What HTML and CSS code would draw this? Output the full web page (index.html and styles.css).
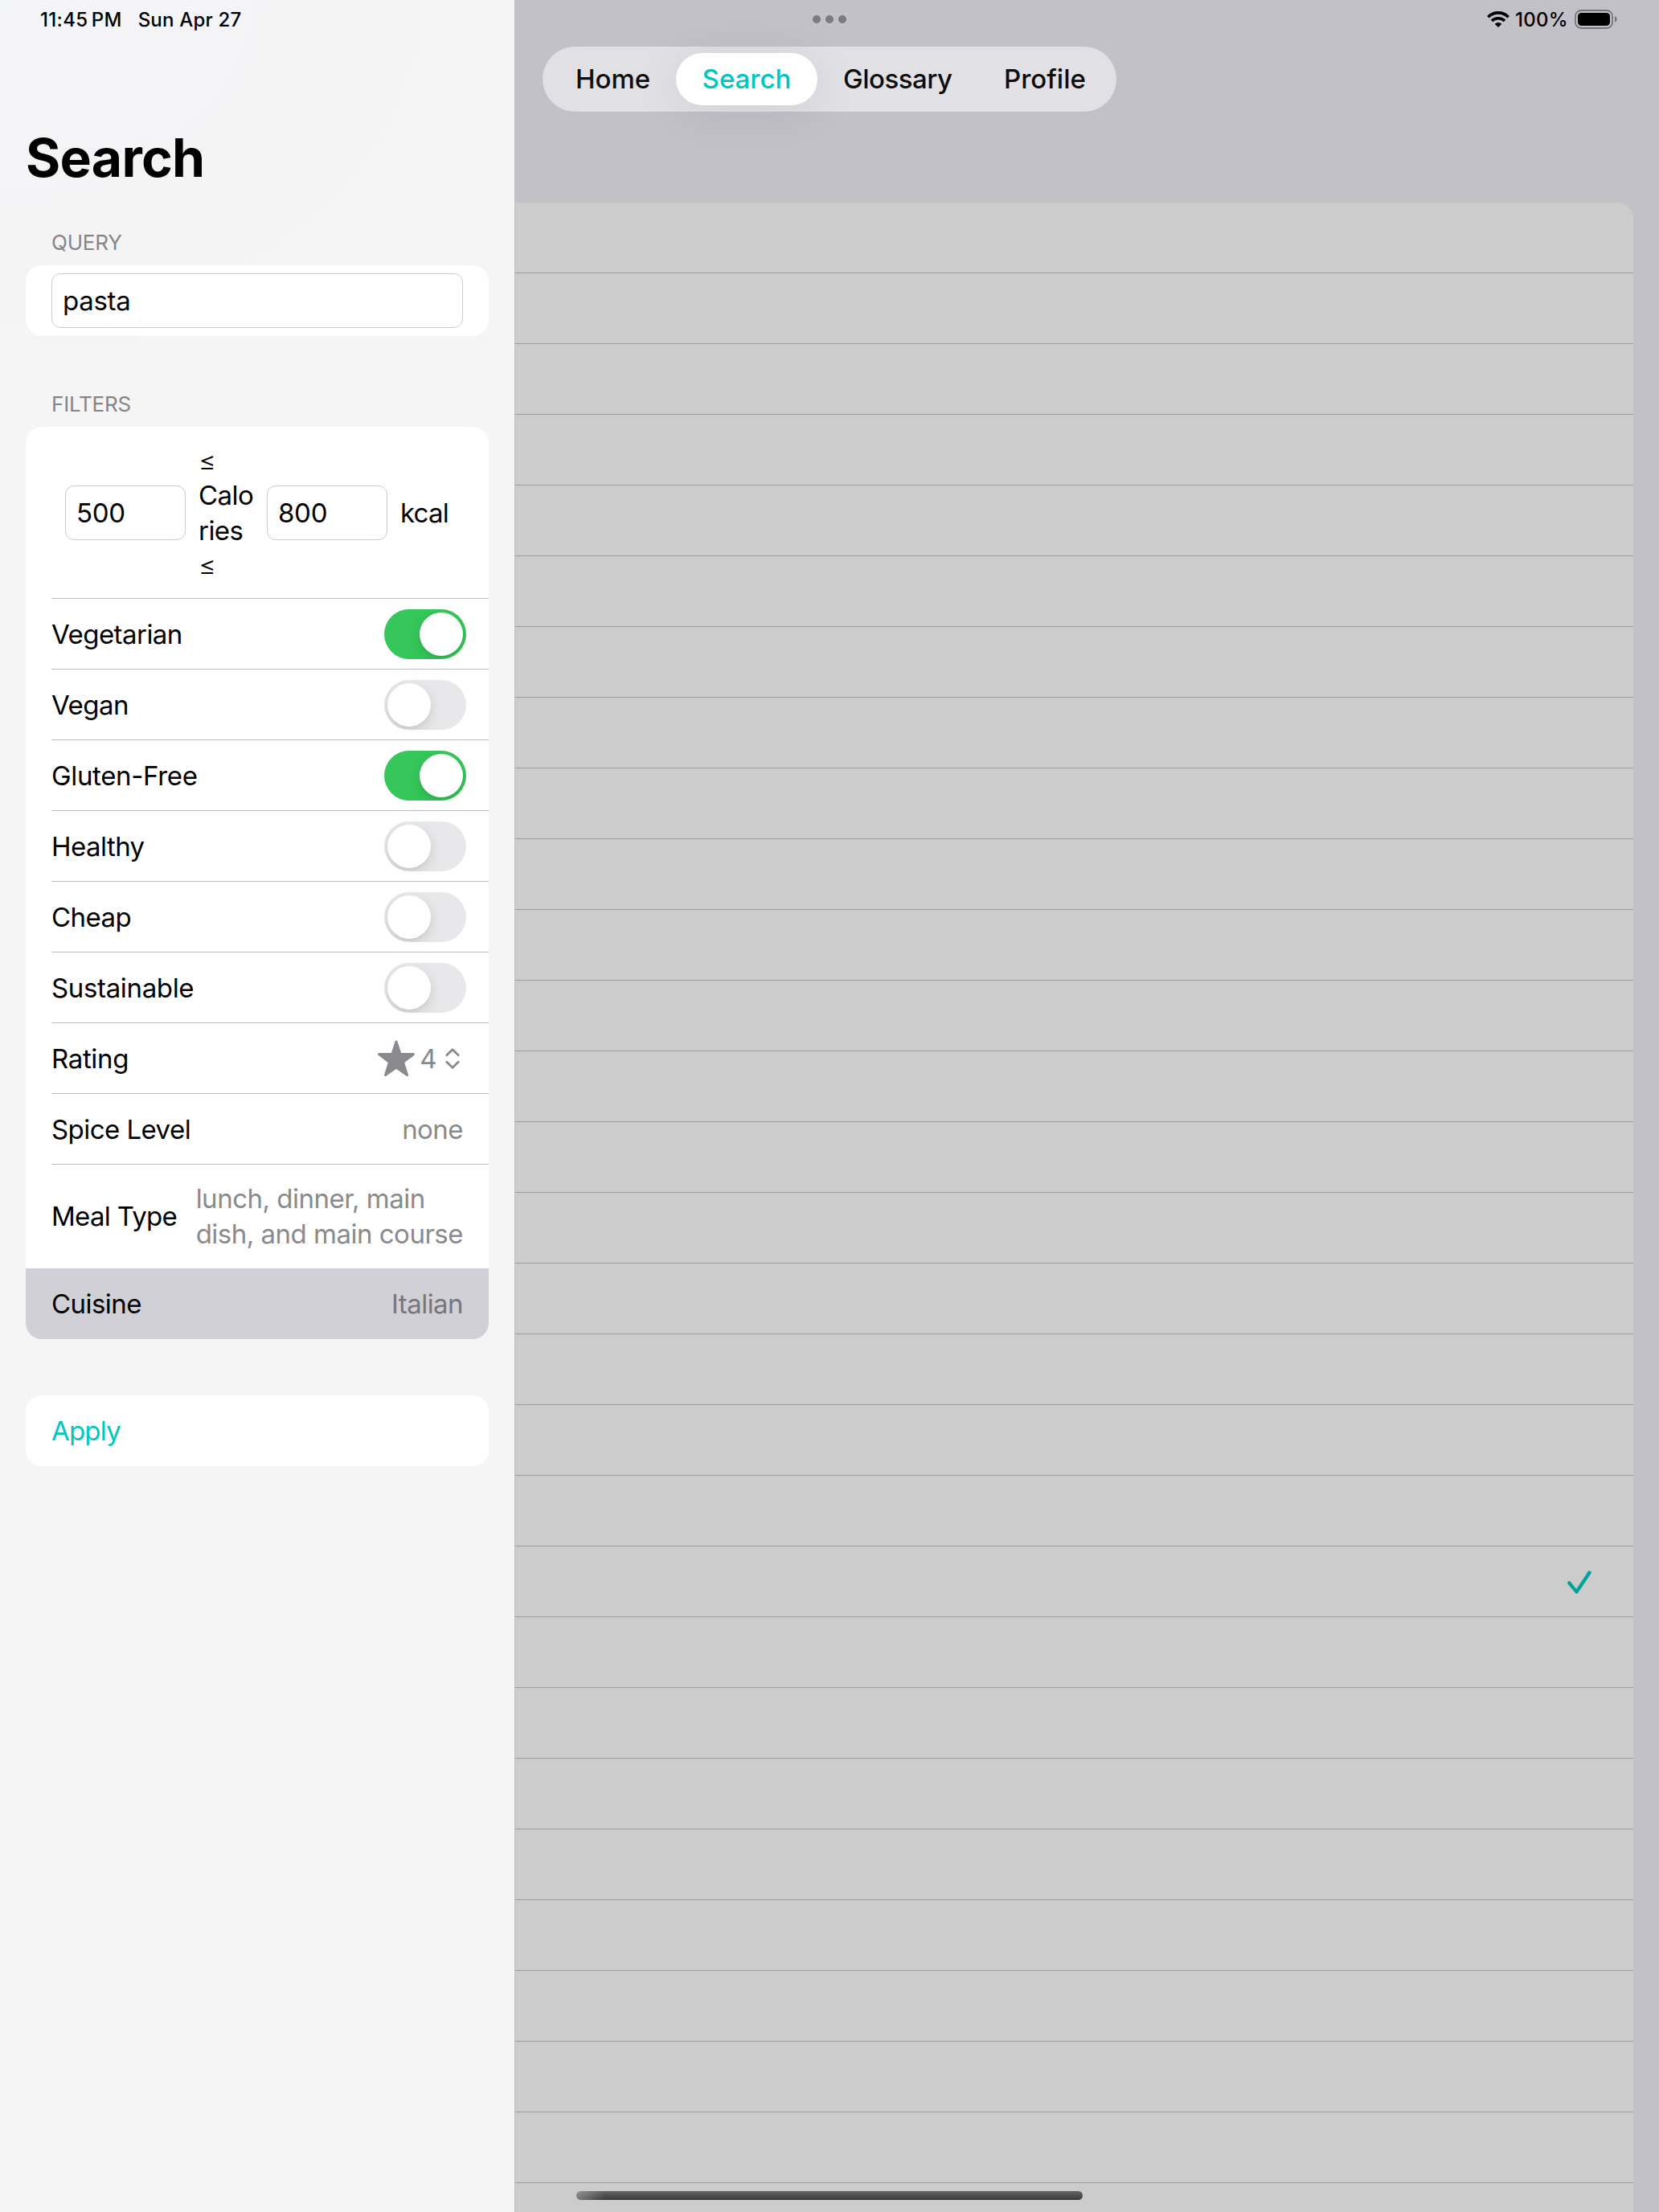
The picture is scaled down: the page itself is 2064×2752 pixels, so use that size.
FILE: index.html
```html
<!DOCTYPE html>
<html lang="en">
<head>
<meta charset="utf-8">
<title>Search</title>
<link rel="stylesheet" href="styles.css">
</head>
<body>
<div class="screen">
  <aside class="sidebar">
    <div class="clock"><span class="time">11:45<span class="thin"> </span>PM</span><span class="date">Sun Apr 27</span></div>
    <h1 class="title">Search</h1>
    <h2 class="section-label">QUERY</h2>
    <div class="card query"><div class="field">pasta</div></div>
    <h2 class="section-label">FILTERS</h2>
    <div class="card">
      <div class="row calories">
        <div class="field num">500</div>
        <div class="range"><span class="sign">≤</span><br>Calo<br>ries<br><span class="sign">≤</span></div>
        <div class="field num">800</div>
        <div class="unit">kcal</div>
      </div>
      <div class="row"><span>Vegetarian</span><i class="toggle on"></i></div>
      <div class="row"><span>Vegan</span><i class="toggle"></i></div>
      <div class="row"><span class="wide">Gluten-Free</span><i class="toggle on"></i></div>
      <div class="row"><span>Healthy</span><i class="toggle"></i></div>
      <div class="row"><span>Cheap</span><i class="toggle"></i></div>
      <div class="row"><span class="wide">Sustainable</span><i class="toggle"></i></div>
      <div class="row"><span class="wide">Rating</span>
        <span class="rating">
          <svg class="star" viewBox="0 0 48 46"><path d="M24 2 L29 17.5 L45.5 17.5 L32.500 27.500 L37.500 43.500 L24 34 L10.500 43.500 L15.500 27.500 L2.500 17.500 L19 17.500 Z" fill="#8a8a8e" stroke="#8a8a8e" stroke-width="3" stroke-linejoin="round"/></svg>
          <span class="score">4</span>
          <svg class="chevrons" viewBox="0 0 18 26"><path d="M1.800 8.800 L9 1.800 L16.200 8.800 M1.800 17.200 L9 24.200 L16.200 17.200" fill="none" stroke="#8a8a8e" stroke-width="2.800" stroke-linecap="round" stroke-linejoin="round"/></svg>
        </span>
      </div>
      <div class="row"><span>Spice Level</span><span class="value">none</span></div>
      <div class="row meal"><span>Meal Type</span><span class="value">lunch, dinner, main<br>dish, and main course</span></div>
      <div class="row selected"><span>Cuisine</span><span class="value">Italian</span></div>
    </div>
    <div class="card apply"><div class="row"><span>Apply</span></div></div>
  </aside>
  <main class="main">
    <div class="status">
      <div class="dots"><i></i><i></i><i></i></div>
      <div class="indicators">
        <svg class="wifi" viewBox="0 0 28 20"><g fill="none" stroke="#000" stroke-width="3.700"><path d="M1.300 7.200 A18 18 0 0 1 26.700 7.200"/><path d="M6 12 A11.500 11.500 0 0 1 22 12"/></g><path d="M14 20 L9.700 15.700 A6.200 6.200 0 0 1 18.300 15.700 Z"/></svg>
        <span>100%</span>
        <svg class="battery" viewBox="0 0 54 24"><rect x="1" y="1" width="46" height="22" rx="7" fill="none" stroke="#77767a" stroke-width="1.800"/><rect x="4" y="4" width="40" height="16" rx="4.500"/><path d="M50 8 a4.300 4.300 0 0 1 0 8 Z" fill="#77767a"/></svg>
      </div>
    </div>
    <nav class="tabs"><span class="home">Home</span><span class="active">Search</span><span class="glossary">Glossary</span><span class="profile">Profile</span></nav>
    <div class="list">
      <div></div><div></div><div></div><div></div><div></div><div></div><div></div><div></div><div></div><div></div>
      <div></div><div></div><div></div><div></div><div></div><div></div><div></div><div></div><div></div>
      <div class="checked"><svg viewBox="0 0 30 30"><path d="M2.300 15.300 L11.500 26.500 L27.500 2.500" fill="none" stroke="#00a39b" stroke-width="4.300" stroke-linecap="round" stroke-linejoin="round"/></svg></div>
      <div></div><div></div><div></div><div></div><div></div><div></div><div></div><div></div><div></div>
    </div>
  </main>
  <div class="home-indicator"></div>
</div>
</body>
</html>
```
FILE: styles.css
```css
* { box-sizing: border-box; }
body { margin: 0; font-family: Inter, "Liberation Sans", sans-serif; font-size: 33px; letter-spacing: -.55px; color: #000; background: #c2c1c7; }
i { font-style: normal; }
svg { display: block; }

.screen { position: relative; display: flex; width: 2064px; height: 2752px; overflow: hidden; }

.sidebar { flex: none; width: 640px; height: 2752px; padding: 0 32px; background: radial-gradient(600px 460px at 0 0, #f4f5f8, #f4f4f5 80%, #f5f5f5); }
.clock { display: flex; gap: 20px; height: 48px; padding-left: 18px; align-items: center; font-size: 24px; font-weight: 500; letter-spacing: .2px; }
.time { letter-spacing: .35px; }
.thin { font-size: 14px; }
.title { margin: 0; padding-top: 108px; font-size: 66px; line-height: 80px; font-weight: 700; letter-spacing: -.7px; }
.section-label { margin: 0; padding-left: 32px; font-size: 26px; line-height: 32px; font-weight: 400; letter-spacing: -.2px; color: #858589; }
.title + .section-label { margin-top: 50px; margin-bottom: 12px; }
.query + .section-label { margin-top: 69px; margin-bottom: 12px; }

.card { background: #fff; border-radius: 20px; overflow: hidden; }
.query { height: 88px; padding: 10px 32px; }
.field { height: 68px; padding-left: 13px; border: 1px solid #cdcdcf; border-radius: 11px; line-height: 66px; letter-spacing: -.3px; background: #fff; }
.row { display: flex; align-items: center; justify-content: space-between; height: 88px; margin-left: 32px; padding-right: 28px; border-bottom: 1px solid #bcbcbe; }
.row.calories { height: 214px; justify-content: flex-start; padding-left: 17px; }
.num { width: 150px; }
.range { width: 68px; margin: 0 17px 0 16px; padding-top: 2px; line-height: 43.3px; }
.sign { font-weight: 300; }
.unit { margin-left: 16px; letter-spacing: -.8px; }
.wide { letter-spacing: -.35px; }
.value { color: #8a8a8b; line-height: 44px; padding-right: 4px; }
.row.meal { height: 129px; padding-bottom: 2px; border-bottom: 0; }
.meal span:first-child { letter-spacing: -.7px; }
.meal .value { letter-spacing: -.5px; }
.row.selected { margin-left: 0; padding-left: 32px; border-bottom: 0; background: #d1d0d6; }
.selected .value { color: #77767d; }
.apply { margin-top: 70px; }
.apply .row { border-bottom: 0; color: #00c7be; letter-spacing: -.8px; }

.toggle { width: 102px; height: 62px; padding: 4px; border-radius: 31px; background: #e8e8ea; overflow: hidden; }
.toggle::before { content: ""; display: block; width: 54px; height: 54px; border-radius: 50%; background: #fff; box-shadow: 0 6px 16px rgba(0, 0, 0, .13), 0 2px 2px rgba(0, 0, 0, .04); }
.toggle.on { background: #35c759; }
.toggle.on::before { margin-left: 40px; }

.rating { display: flex; align-items: center; color: #8a8a8e; padding-right: 8px; }
.star { width: 48px; height: 46px; margin-right: 5px; }
.score { margin-right: 11px; }
.chevrons { width: 18px; height: 26px; }

.main { flex: 1; height: 2752px; border-left: 1px solid #bfbfc2; }
.status { display: flex; justify-content: space-between; height: 48px; padding: 0 51px 0 370px; align-items: center; }
.dots { display: flex; gap: 6px; }
.dots i { width: 10px; height: 10px; border-radius: 50%; background: #7c7b80; }
.indicators { display: flex; align-items: center; font-size: 24px; font-weight: 500; letter-spacing: .3px; }
.wifi { width: 28px; height: 20px; margin-right: 7px; }
.battery { width: 54px; height: 24px; margin-left: 8px; }
.tabs { display: grid; grid-template-columns: 125px 176px 232px auto; width: 714px; height: 81px; margin: 10px 0 0 34px; padding: 8px 0 8px 41px; border-radius: 41px; background: #e1e0e5; font-weight: 500; line-height: 65px; letter-spacing: 0; color: #0d0d0e; }
.tabs span { height: 65px; border-radius: 33px; }
.tabs .active { text-align: center; color: #00c7be; background: #fff; box-shadow: 0 8px 60px rgba(0, 0, 0, .08); }
.tabs .glossary { padding-left: 32px; letter-spacing: -.5px; }

.list { height: 2500px; margin: 113px 32px 0 0; border-top-right-radius: 20px; background: #ccc; overflow: hidden; }
.list div { height: 88px; border-bottom: 1px solid #9d9d9f; }
.list .checked { display: flex; align-items: center; justify-content: flex-end; padding: 3px 52px 0 0; }
.checked svg { width: 30px; height: 30px; }

.home-indicator { position: absolute; left: 717px; top: 2726px; width: 630px; height: 11px; border-radius: 6px; background: linear-gradient(90deg, rgba(204, 204, 204, .45) 0, rgba(204, 204, 204, 0) 36px), linear-gradient(#646464, #3a3838); }
```
